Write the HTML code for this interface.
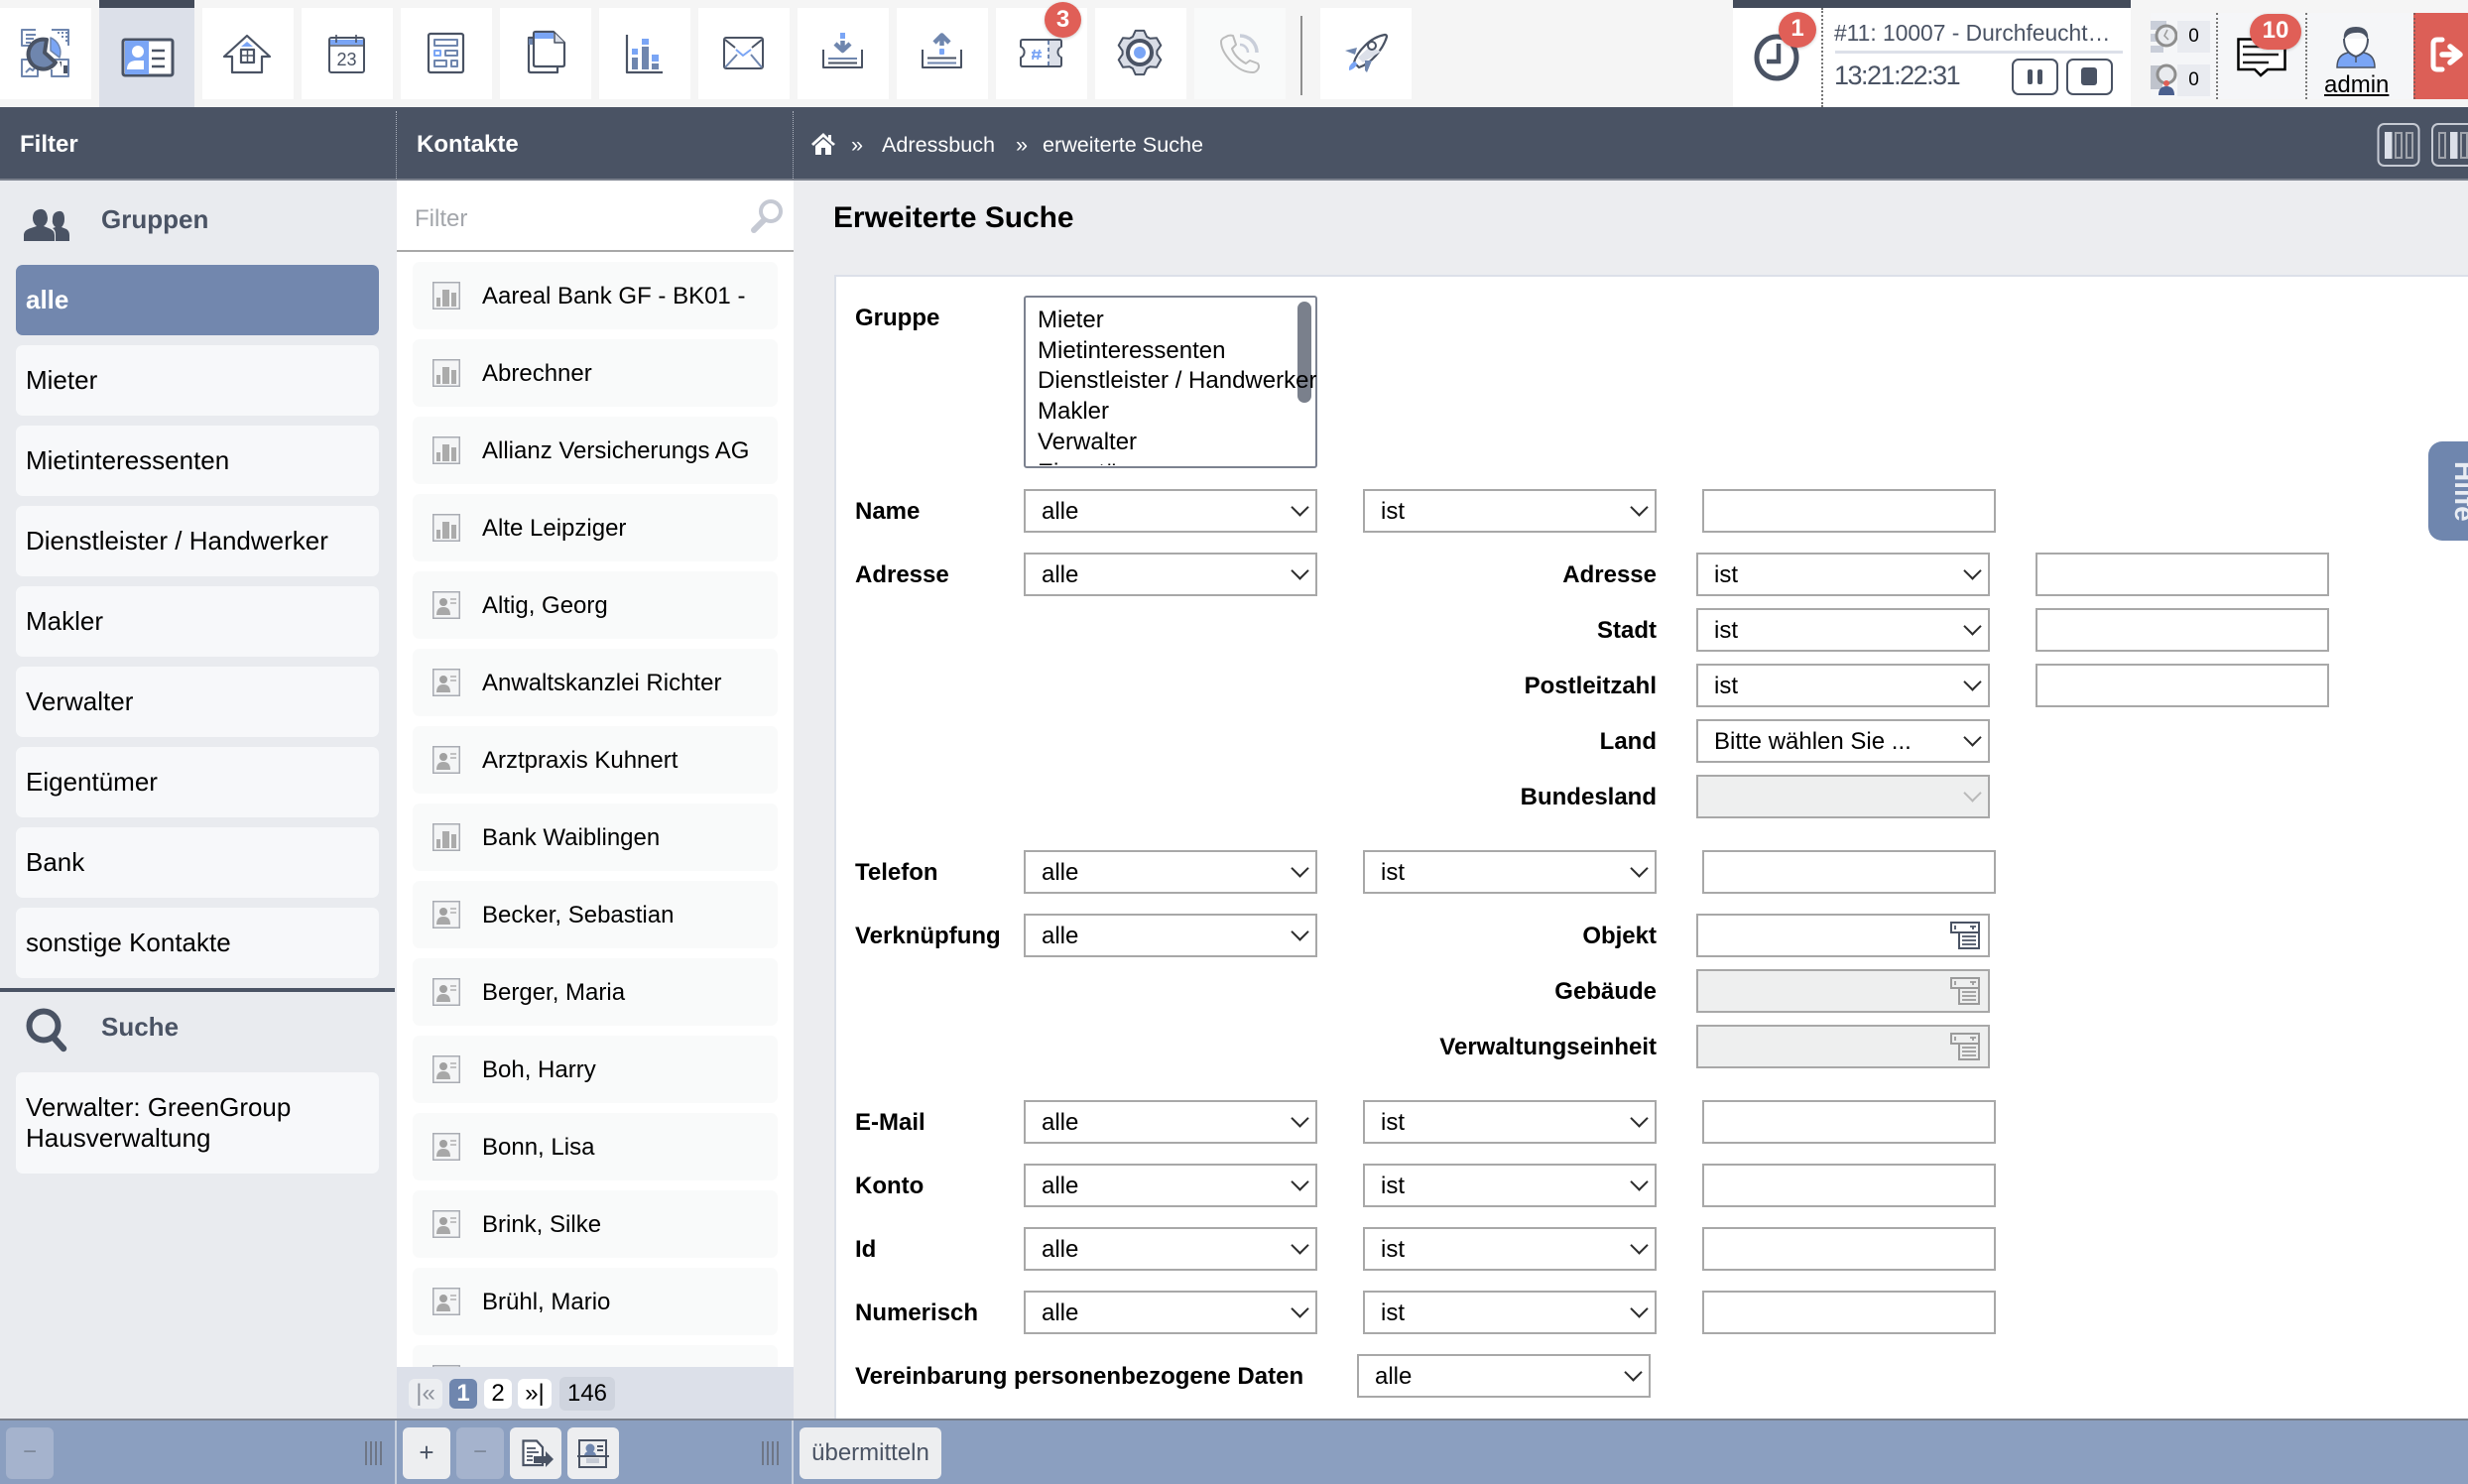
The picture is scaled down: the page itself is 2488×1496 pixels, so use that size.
<!DOCTYPE html>
<html lang="de"><head><meta charset="utf-8"><title>Erweiterte Suche</title>
<style>
*{box-sizing:border-box}
html,body{margin:0;padding:0;width:2488px;height:1496px;overflow:hidden;background:#ecedf0;font-family:"Liberation Sans",sans-serif;font-size:24px;color:#000}
div,span,a{position:absolute;white-space:nowrap}
svg{position:absolute;overflow:visible}
.t{background:#fff;top:8px;width:92px;height:92px}
.h{top:108px;height:72px;line-height:76px;color:#fff}
.g{left:16px;width:366px;height:71px;background:#f7f8fa;border-radius:7px;line-height:71px;padding-left:10px;font-size:26px}
.c{left:416px;width:368px;height:68px;background:#f9fafa;border-radius:7px;line-height:69px;padding-left:70px}
.c svg{left:20px;top:20px}
.l{font-weight:bold;height:44px;line-height:46px}
.r{font-weight:bold;height:44px;line-height:46px;right:818px}
.s,.i{height:44px;width:296px;background:#fff;border:2px solid #a8a8a8;line-height:42px;padding-left:16px}
.s:after{content:"";position:absolute;right:9px;top:10px;width:11px;height:11px;border-right:2px solid #2c2c2c;border-bottom:2px solid #2c2c2c;transform:rotate(45deg)}
.d{background:#eeefef}
.d:after{border-color:#b9b9b9}
.p{top:1439px;height:52px;border-radius:6px;background:#edeef0;text-align:center;line-height:50px;color:#4a5364}
.pd{background:#a5b3cd;color:#7d8899}
.pg{top:1390px;height:30px;line-height:30px;border-radius:6px;background:#fff;text-align:center}
.b{background:#e05f57;color:#fff;font-weight:bold;border-radius:50%;text-align:center;box-shadow:0 1px 3px rgba(0,0,0,.2)}
.o{left:1047px;line-height:30px;height:30px}
</style></head><body>

<!-- top bar -->
<div style="left:0;top:0;width:2488px;height:108px;background:#f5f5f5"></div>
<div class="t" style="left:0"></div>
<div style="left:100px;top:0;width:96px;height:108px;background:#dce0e9"></div>
<div style="left:100px;top:0;width:96px;height:8px;background:#434b5a"></div>
<div class="t" style="left:204px"></div><div class="t" style="left:304px"></div><div class="t" style="left:404px"></div><div class="t" style="left:504px"></div><div class="t" style="left:604px"></div><div class="t" style="left:704px"></div><div class="t" style="left:804px"></div><div class="t" style="left:904px"></div><div class="t" style="left:1004px"></div><div class="t" style="left:1104px"></div>
<div class="t" style="left:1204px;background:#f9fafa"></div>
<div style="left:1311px;top:16px;width:2px;height:80px;background:#8f8f8f"></div>
<div class="t" style="left:1331px"></div>

<svg style="left:0;top:0" width="1440" height="108" viewBox="0 0 1440 108" fill="none" stroke-linejoin="round">
<!-- dashboard -->
<g stroke="#6f86ae" stroke-width="2">
<path d="M36 30H22V46H30M52 30H69V46M30 60H22V77H38V70M55 60H69V77H52V70"/>
<path d="M26 35H36M26 39H34M26 43H31M58 33h2M62 33h2M66 33h2M62 37h2M66 37h2M66 41h2M26 73l4-4 3 2 4-5"/>
</g>
<path d="M60 62h2V68M64 74V66h4v8z" fill="#4a5364"/>
<path d="M47 40A15 15 0 1 0 56 63L45 53Z" fill="#6f86ae" stroke="#4a5364" stroke-width="4"/>
<path d="M51 38A16 16 0 0 1 60 58L51 51Z" fill="#7aa5f5" stroke="#6f86ae" stroke-width="1.5"/>
<!-- contacts -->
<rect x="124" y="40" width="50" height="36" rx="2" fill="#fff" stroke="#4a5364" stroke-width="3"/>
<rect x="126" y="41" width="24" height="34" fill="#7aa5f5"/>
<circle cx="139" cy="52" r="6" fill="#fff"/>
<path d="M128 70q0-9 10-9h7v9z" fill="#fff"/>
<path d="M153 51H166M153 59H166M153 67H166" stroke="#4a5364" stroke-width="2.5"/>
<!-- house -->
<path d="M234 73V57H226L249 36L272 57H264V73Z" stroke="#4a5364" stroke-width="2.2" fill="#fff"/>
<path d="M249 42L243 47H255Z" fill="#7aa5f5"/>
<rect x="243" y="50" width="13" height="13" stroke="#4a5364" stroke-width="2.2"/>
<path d="M249.500 50V63M243 56H256" stroke="#4a5364" stroke-width="1.5"/>
<!-- calendar -->
<rect x="332" y="38" width="35" height="35" rx="2" stroke="#4a5364" stroke-width="2"/>
<rect x="333" y="40" width="33" height="5" fill="#7aa5f5"/>
<path d="M339 35V43M359 35V43" stroke="#4a5364" stroke-width="1.600"/>
<path d="M333 46H366" stroke="#4a5364" stroke-width="1.500"/>
<text x="349.500" y="66" text-anchor="middle" font-family="Liberation Sans" font-size="18" fill="#4a5364" stroke="none">23</text>
<!-- form -->
<rect x="432" y="34" width="35" height="39" rx="2" stroke="#4a5364" stroke-width="2.200"/>
<g stroke="#6f86ae" stroke-width="2"><rect x="438" y="40" width="23" height="6"/><rect x="449" y="51" width="12" height="5"/><rect x="438" y="61" width="12" height="6"/><rect x="455" y="61" width="6" height="6"/></g>
<rect x="438" y="51" width="6" height="5" stroke="#7aa5f5" stroke-width="2"/>
<!-- docs -->
<path d="M538 38H533V71q0 2 2 2H562V67" stroke="#4a5364" stroke-width="2.200"/>
<rect x="533" y="39" width="5" height="6" fill="#6f86ae"/>
<path d="M540 32H558L569 43V65q0 2-2 2H540q-2 0-2-2V34q0-2 2-2Z" stroke="#4a5364" stroke-width="2.200" fill="#fff"/>
<rect x="539" y="33" width="19" height="6" fill="#7aa5f5"/>
<path d="M559 33V43H569" stroke="#4a5364" stroke-width="1.500" fill="#dce0e9"/>
<!-- stats -->
<path d="M632 35V73H668" stroke="#4a5364" stroke-width="2.200"/>
<rect x="637" y="49" width="6" height="6" fill="#7aa5f5"/><rect x="637" y="58" width="6" height="12" fill="#6f86ae"/>
<rect x="647" y="39" width="7" height="6" fill="#7aa5f5"/><rect x="647" y="47" width="7" height="23" fill="#6f86ae"/>
<rect x="657" y="55" width="7" height="7" fill="#7aa5f5"/><rect x="657" y="64" width="7" height="6" fill="#6f86ae"/>
<!-- mail -->
<rect x="730" y="38" width="39" height="31" rx="2" stroke="#4a5364" stroke-width="2"/>
<path d="M731 40L741 48M768 40L758 48" stroke="#4a5364" stroke-width="2"/>
<path d="M742 50L749 56L757 50" stroke="#7aa5f5" stroke-width="2"/>
<path d="M731 68L743 55M768 68L757 55" stroke="#6f86ae" stroke-width="2"/>
<!-- import -->
<path d="M830 50V68H869V50" stroke="#4a5364" stroke-width="2"/>
<rect x="847" y="33" width="5" height="6" fill="#7aa5f5"/>
<path d="M849.500 41V52M842 44L849.500 51L857 44" stroke="#6f86ae" stroke-width="4.500"/>
<path d="M835 59H864" stroke="#6f86ae" stroke-width="2"/><path d="M835 63.500H864" stroke="#4a5364" stroke-width="2"/>
<!-- export -->
<path d="M930 50V68H969V50" stroke="#4a5364" stroke-width="2"/>
<path d="M949.500 46V38M942 43L949.500 35.500L957 43" stroke="#6f86ae" stroke-width="4.500"/>
<rect x="947" y="49" width="5" height="6" rx="1" fill="#7aa5f5"/>
<path d="M935 58.500H964" stroke="#4a5364" stroke-width="2"/><path d="M935 63.500H964" stroke="#6f86ae" stroke-width="2"/>
<!-- ticket -->
<path d="M1031 40H1068q2 0 2 2V47a6 6 0 0 0 0 11V65q0 2-2 2H1031q-2 0-2-2V58a6 6 0 0 0 0-11V42q0-2 2-2Z" stroke="#4a5364" stroke-width="2"/>
<path d="M1057 41H1068q1 0 1 1V47a6 6 0 0 0 0 11V65q0 1-1 1H1057Z" fill="#dce0e9"/>
<path d="M1057 41V66" stroke="#6f86ae" stroke-width="2" stroke-dasharray="4 3"/>
<path d="M1043 50L1041 60M1048 50L1046 60M1040 53H1050M1040 57H1050" stroke="#7aa5f5" stroke-width="1.800"/>
<!-- gear -->
<polygon transform="translate(1149 53)" points="-7.100,-16 -4.300,-22.100 4.300,-22.100 7.100,-16 10.300,-14.200 17,-14.800 21.300,-7.300 17.400,-1.800 17.400,1.800 21.300,7.300 17,14.800 10.300,14.200 7.100,16 4.300,22.100 -4.300,22.100 -7.100,16 -10.300,14.200 -17,14.800 -21.300,7.300 -17.400,1.800 -17.400,-1.800 -21.300,-7.300 -17,-14.800 -10.300,-14.200" fill="#d9dde6" stroke="#4a5364" stroke-width="2"/>
<circle cx="1149" cy="53" r="12" fill="#fff" stroke="#4a5364" stroke-width="4"/>
<circle cx="1149" cy="53" r="6" fill="#7aa5f5"/>
<!-- phone -->
<path d="M1236 37q3-2 7-1l3 9-4 4q3 9 14 15l4-3 8 3q2 3 0 6t-5 3q-12 0-22-11t-10-20q0-3 5-5Z" stroke="#bcbcbc" stroke-width="2"/>
<path d="M1250 36A17 17 0 0 1 1267 53" stroke="#c9ced9" stroke-width="3.500"/>
<path d="M1250 45A8 8 0 0 1 1258 53" stroke="#c9ced9" stroke-width="2.500"/>
<!-- rocket -->
<path d="M1396 34q-11 2-20 11t-11 17l5 5q9-3 17-12t11-19q0-2-2-2Z" transform="translate(0 1)" fill="#fff" stroke="#4a5364" stroke-width="2.200"/>
<path d="M1392 52L1374 63L1369 58L1381 47Z" fill="#dce0e9"/>
<circle cx="1383" cy="46" r="4" fill="#fff" stroke="#4a5364" stroke-width="2"/>
<path d="M1368 48L1356 51L1366 55Z M1376 71L1376 61H1383L1378 73Z" fill="#6f86ae"/>
<path d="M1365 62q3 1 3 3q-3 5-8 6q-1-5 5-9Z" fill="#7aa5f5"/>
</svg>
<div class="b" style="left:1053px;top:2px;width:37px;height:36px;font-size:24px;line-height:35px">3</div>

<!-- timer block -->
<div style="left:1747px;top:0;width:401px;height:108px;background:#fff"></div>
<div style="left:1747px;top:0;width:401px;height:8px;background:#434b5a"></div>
<div style="left:1836px;top:8px;height:100px;border-left:2px dotted #777"></div>
<svg style="left:1747px;top:8px" width="90" height="100" fill="none"><ellipse cx="44" cy="50" rx="20" ry="21" stroke="#4a5364" stroke-width="5"/><path d="M46 36V54H34" stroke="#4a5364" stroke-width="4.500"/></svg>
<div class="b" style="left:1793px;top:12px;width:38px;height:36px;font-size:24px;line-height:34px">1</div>
<div style="left:1849px;top:18px;width:285px;height:30px;line-height:30px;font-size:22.800px;color:#4a5364">#11: 10007 - Durchfeucht…</div>
<div style="left:1850px;top:51px;width:290px;height:2.500px;background:#dce0e9"></div>
<div style="left:1849px;top:58px;height:36px;line-height:36px;font-size:27px;letter-spacing:-1.500px;color:#4a5364">13:21:22:31</div>
<div style="left:2028px;top:59px;width:47px;height:37px;border:2px solid #4a5364;border-radius:7px"></div>
<div style="left:2044px;top:70px;width:5px;height:15px;background:#4a5364;border-radius:2px"></div>
<div style="left:2054px;top:70px;width:5px;height:15px;background:#4a5364;border-radius:2px"></div>
<div style="left:2083px;top:59px;width:47px;height:37px;border:2px solid #4a5364;border-radius:7px"></div>
<div style="left:2098px;top:68px;width:16px;height:18px;background:#4a5364;border-radius:3px"></div>

<!-- right tools -->
<div style="left:2168px;top:13px;width:266px;height:87px;background:#f5f6f8"></div>
<svg style="left:2168px;top:20px" width="30" height="80" fill="none">
<path d="M0 1H16V10H0ZM0 14H16V22H0ZM0 26H13V33H0Z" fill="#c9ced9"/>
<circle cx="16" cy="16" r="10" fill="#e9ebef" stroke="#8e8e8e" stroke-width="3"/><path d="M17 10L14 16L18 20" stroke="#9a9a9a" stroke-width="1.500"/>
<path d="M0 46H12V70H0Z" fill="#bfc3cc"/>
<circle cx="16" cy="55" r="9" fill="#e9ebef" stroke="#8e8e8e" stroke-width="3"/>
<path d="M8 76q0-9 8-9t8 9Z" fill="#4a5f8e"/><circle cx="16" cy="64" r="3" fill="#e05f57"/>
</svg>
<div style="left:2195px;top:21px;width:33px;height:32px;background:#e9ebf0;text-align:center;line-height:32px;font-size:19px">0</div>
<div style="left:2195px;top:65px;width:33px;height:32px;background:#e9ebf0;text-align:center;line-height:32px;font-size:19px">0</div>
<div style="left:2234px;top:13px;height:87px;border-left:2px dotted #777"></div>
<svg style="left:2255px;top:38px" width="52" height="42" fill="none">
<path d="M1.500 1.500H48.500V32H31L24 38L18 32H1.500Z" fill="#fff" stroke="#000" stroke-width="2.500"/>
<path d="M6 9H38M6 17H42M6 25H32" stroke="#222" stroke-width="2.500"/></svg>
<div class="b" style="left:2268px;top:14px;width:52px;height:36px;font-size:24px;line-height:34px;border-radius:18px">10</div>
<div style="left:2324px;top:13px;height:87px;border-left:2px dotted #777"></div>
<svg style="left:2354px;top:26px" width="42" height="44" fill="none">
<path d="M2 42q0-11 8-14l6-2h10l6 2q8 3 8 14Z" fill="#7aa5f5" stroke="#4a5364" stroke-width="1.500"/>
<path d="M9 13q0 14 12 18 12-4 12-18" fill="#fff" stroke="#4a5364" stroke-width="2"/>
<path d="M9 15q-2-14 12-14t12 14q-3-9-12-8-9 0-12 8Z" fill="#4a5364"/>
<path d="M21 31V37" stroke="#4a5364" stroke-width="1.500"/></svg>
<a style="left:2343px;top:71px;height:30px;line-height:30px;color:#000;text-decoration:underline;font-size:24px">admin</a>
<div style="left:2433px;top:13px;width:55px;height:87px;background:#dc5f57;border-left:2px dotted #8a5a58"></div>
<svg style="left:2450px;top:38px" width="38" height="38" fill="none">
<path d="M12 2H7q-4 0-4 4V28q0 4 4 4H12" stroke="#fff" stroke-width="5" stroke-linecap="round"/>
<path d="M12 17H26M20 9L30 17L20 25" stroke="#fff" stroke-width="5.500" stroke-linecap="round" stroke-linejoin="round"/></svg>

<!-- header -->
<div style="left:0;top:108px;width:2488px;height:72px;background:#4a5364"></div>
<div style="left:0;top:180px;width:2488px;height:2px;background:#7a808c"></div>
<div style="left:399px;top:112px;height:68px;border-left:1px dotted #aab0bc"></div>
<div style="left:799px;top:112px;height:68px;border-left:1px dotted #aab0bc"></div>
<div class="h" style="left:20px;font-weight:bold">Filter</div>
<div class="h" style="left:420px;font-weight:bold">Kontakte</div>
<svg style="left:818px;top:133px" width="26" height="24"><path d="M0 12L12 1L17 6V3H20V9L24 12L22 14L12 5L2 14ZM4 14L12 7L20 14V23H14V16H10V23H4Z" fill="#fff"/></svg>
<div class="h" style="left:858px;font-size:21.600px">»</div>
<div class="h" style="left:889px;font-size:21.600px">Adressbuch</div>
<div class="h" style="left:1024px;font-size:21.600px">»</div>
<div class="h" style="left:1051px;font-size:21.600px">erweiterte Suche</div>
<svg style="left:2396px;top:123px" width="92" height="46" fill="none">
<rect x="1.500" y="2" width="41" height="42" rx="6" stroke="#c6cad3" stroke-width="2"/>
<rect x="8" y="10" width="7.500" height="27" fill="#dce0e9"/><rect x="19" y="11" width="6" height="25" stroke="#a0a4ac" stroke-width="2"/><rect x="30" y="11" width="6" height="25" stroke="#a0a4ac" stroke-width="2"/>
<rect x="56" y="2" width="44" height="42" rx="6" stroke="#c6cad3" stroke-width="2"/>
<rect x="63" y="11" width="6" height="25" stroke="#a0a4ac" stroke-width="2"/><rect x="74" y="10" width="7.500" height="27" fill="#dce0e9"/><rect x="85" y="11" width="6" height="25" stroke="#a0a4ac" stroke-width="2"/></svg>

<!-- filter col -->
<div style="left:0;top:182px;width:400px;height:1248px;background:#e9ebef"></div>
<svg style="left:24px;top:211px" width="46" height="33"><path d="M0 32V26q0-5 7-7l6-2q-4-3-4-8 0-8 7-9t8 9q0 5-4 8l5 2q6 2 6 7v6Z" fill="#4a5364"/><path d="M32 32v-7q0-4-3-6l3-1q-4-3-3-8 0-7 6-8t6 8q0 5-3 8l5 2q3 2 3 6v6Z" fill="#4a5364"/></svg>
<div style="left:102px;top:200px;height:42px;line-height:42px;font-size:26px;font-weight:bold;color:#4a5364">Gruppen</div>
<div class="g" style="top:267px;background:#7287ae;color:#fff;font-weight:bold">alle</div>
<div class="g" style="top:348px">Mieter</div>
<div class="g" style="top:429px">Mietinteressenten</div>
<div class="g" style="top:510px">Dienstleister / Handwerker</div>
<div class="g" style="top:591px">Makler</div>
<div class="g" style="top:672px">Verwalter</div>
<div class="g" style="top:753px">Eigentümer</div>
<div class="g" style="top:834px">Bank</div>
<div class="g" style="top:915px">sonstige Kontakte</div>
<div style="left:0;top:996px;width:398px;height:4px;background:#4a5364"></div>
<svg style="left:25px;top:1016px" width="44" height="44" fill="none"><circle cx="19" cy="18" r="14.500" stroke="#4a5364" stroke-width="6"/><path d="M29 30L39 41" stroke="#4a5364" stroke-width="6.500" stroke-linecap="round"/></svg>
<div style="left:102px;top:1014px;height:42px;line-height:42px;font-size:26px;font-weight:bold;color:#4a5364">Suche</div>
<div class="g" style="top:1081px;height:102px;line-height:31px;padding-top:20px">Verwalter: GreenGroup<br>Hausverwaltung</div>

<svg width="0" height="0" style="left:0;top:0">
<symbol id="ch" viewBox="0 0 28 28"><rect x=".75" y=".75" width="26.500" height="26.500" fill="#f4f5f6" stroke="#a9acb3" stroke-width="1.500"/><path d="M4 16h4v9H4zM10 8h7v17h-7zM19 11h5v14h-5z" fill="#ababab"/></symbol>
<symbol id="pe" viewBox="0 0 28 28"><rect x=".75" y=".75" width="26.500" height="26.500" fill="#f4f5f6" stroke="#a9acb3" stroke-width="1.500"/><circle cx="11" cy="11" r="4" fill="#a0a0a0"/><path d="M4 24q0-8 7-8t7 8Z" fill="#a8a8a8"/><path d="M18 8h6M18 12h6" stroke="#b0b0b0" stroke-width="1.500"/></symbol>
</svg>

<!-- contacts col -->
<div style="left:400px;top:182px;width:400px;height:1196px;background:#fff;overflow:hidden">
<div style="left:18px;top:21px;height:36px;line-height:36px;color:#a3a6ab">Filter</div>
<svg style="left:356px;top:18px" width="34" height="36" fill="none"><circle cx="21" cy="13" r="10" stroke="#c5c9d3" stroke-width="4"/><path d="M14 22L4 32" stroke="#c5c9d3" stroke-width="6" stroke-linecap="round"/></svg>
<div style="left:0;top:70px;width:400px;height:2px;background:#a8a8a8"></div>
<div class="c" style="left:16px;top:82px"><svg width="28" height="28"><use href="#ch"/></svg>Aareal Bank GF - BK01 -</div>
<div class="c" style="left:16px;top:160px"><svg width="28" height="28"><use href="#ch"/></svg>Abrechner</div>
<div class="c" style="left:16px;top:238px"><svg width="28" height="28"><use href="#ch"/></svg>Allianz Versicherungs AG</div>
<div class="c" style="left:16px;top:316px"><svg width="28" height="28"><use href="#ch"/></svg>Alte Leipziger</div>
<div class="c" style="left:16px;top:394px"><svg width="28" height="28"><use href="#pe"/></svg>Altig, Georg</div>
<div class="c" style="left:16px;top:472px"><svg width="28" height="28"><use href="#pe"/></svg>Anwaltskanzlei Richter</div>
<div class="c" style="left:16px;top:550px"><svg width="28" height="28"><use href="#pe"/></svg>Arztpraxis Kuhnert</div>
<div class="c" style="left:16px;top:628px"><svg width="28" height="28"><use href="#ch"/></svg>Bank Waiblingen</div>
<div class="c" style="left:16px;top:706px"><svg width="28" height="28"><use href="#pe"/></svg>Becker, Sebastian</div>
<div class="c" style="left:16px;top:784px"><svg width="28" height="28"><use href="#pe"/></svg>Berger, Maria</div>
<div class="c" style="left:16px;top:862px"><svg width="28" height="28"><use href="#pe"/></svg>Boh, Harry</div>
<div class="c" style="left:16px;top:940px"><svg width="28" height="28"><use href="#pe"/></svg>Bonn, Lisa</div>
<div class="c" style="left:16px;top:1018px"><svg width="28" height="28"><use href="#pe"/></svg>Brink, Silke</div>
<div class="c" style="left:16px;top:1096px"><svg width="28" height="28"><use href="#pe"/></svg>Brühl, Mario</div>
<div class="c" style="left:16px;top:1174px"><svg width="28" height="28"><use href="#pe"/></svg></div>
</div>

<!-- pagination -->
<div style="left:400px;top:1378px;width:400px;height:52px;background:#dce0e9"></div>
<div class="pg" style="left:412px;width:34px;background:#eceef1;color:#8d929c">|«</div>
<div class="pg" style="left:453px;width:28px;background:#6f86ae;color:#fff;font-weight:bold">1</div>
<div class="pg" style="left:488px;width:28px">2</div>
<div class="pg" style="left:522px;width:34px">»|</div>
<div class="pg" style="left:564px;top:1388px;width:56px;height:34px;line-height:34px;background:#cfd4de">146</div>

<!-- main -->
<div style="left:800px;top:182px;width:1688px;height:1248px;background:#ecedf0"></div>
<div style="left:840px;top:220px;height:0"><span style="left:0;top:-20px;height:40px;line-height:40px;font-size:29.900px;font-weight:bold">Erweiterte Suche</span></div>
<div style="left:841px;top:277px;width:1647px;height:1153px;background:#fff;border-left:2px solid #dce0e9;border-top:2px solid #dce0e9"></div>

<!-- Hilfe -->
<div style="left:2448px;top:445px;width:40px;height:100px;background:#6f86ae;border-radius:14px 0 0 14px;overflow:hidden"><span style="left:16px;top:20px;writing-mode:vertical-rl;color:#e8ecf3;font-size:28px;font-weight:bold;line-height:40px">Hilfe</span></div>

<!-- form -->
<div class="l" style="left:862px;top:298px">Gruppe</div>
<div style="left:1032px;top:298px;width:296px;height:174px;background:#fff;border:2px solid #7c8290;border-radius:3px"></div>
<div style="left:1034px;top:300px;width:293px;height:169px;overflow:hidden">
<div style="left:274px;top:4px;width:14px;height:102px;background:#7a808c;border-radius:7px"></div>
<div class="o" style="left:12px;top:8px">Mieter</div>
<div class="o" style="left:12px;top:39px">Mietinteressenten</div>
<div class="o" style="left:12px;top:69px">Dienstleister / Handwerker</div>
<div class="o" style="left:12px;top:100px">Makler</div>
<div class="o" style="left:12px;top:131px">Verwalter</div>
<div class="o" style="left:12px;top:162px">Eigentümer</div>
</div>

<div class="l" style="left:862px;top:493px">Name</div>
<div class="s" style="left:1032px;top:493px">alle</div><div class="s" style="left:1374px;top:493px">ist</div><div class="i" style="left:1716px;top:493px"></div>

<div class="l" style="left:862px;top:557px">Adresse</div>
<div class="s" style="left:1032px;top:557px">alle</div>
<div class="r" style="top:557px">Adresse</div><div class="s" style="left:1710px;top:557px">ist</div><div class="i" style="left:2052px;top:557px"></div>
<div class="r" style="top:613px">Stadt</div><div class="s" style="left:1710px;top:613px">ist</div><div class="i" style="left:2052px;top:613px"></div>
<div class="r" style="top:669px">Postleitzahl</div><div class="s" style="left:1710px;top:669px">ist</div><div class="i" style="left:2052px;top:669px"></div>
<div class="r" style="top:725px">Land</div><div class="s" style="left:1710px;top:725px">Bitte wählen Sie ...</div>
<div class="r" style="top:781px">Bundesland</div><div class="s d" style="left:1710px;top:781px"></div>

<div class="l" style="left:862px;top:857px">Telefon</div>
<div class="s" style="left:1032px;top:857px">alle</div><div class="s" style="left:1374px;top:857px">ist</div><div class="i" style="left:1716px;top:857px"></div>

<div class="l" style="left:862px;top:921px">Verknüpfung</div>
<div class="s" style="left:1032px;top:921px">alle</div>
<div class="r" style="top:921px">Objekt</div><div class="i" style="left:1710px;top:921px"></div>
<div class="r" style="top:977px">Gebäude</div><div class="i d" style="left:1710px;top:977px"></div>
<div class="r" style="top:1033px">Verwaltungseinheit</div><div class="i d" style="left:1710px;top:1033px"></div>
<svg width="0" height="0" style="left:0;top:0"><symbol id="pk" viewBox="0 0 30 28"><path d="M1 1H29V11H1ZM9 11V27H29V11" fill="none" stroke="currentColor" stroke-width="2"/><path d="M5 4V8M20 5H26M23 5V8M12 15H26M12 19H26M12 23H26" fill="none" stroke="currentColor" stroke-width="1.800"/></symbol></svg>
<svg style="left:1966px;top:929px;color:#4a5364" width="30" height="28"><use href="#pk"/></svg>
<svg style="left:1966px;top:985px;color:#9a9a9a" width="30" height="28"><use href="#pk"/></svg>
<svg style="left:1966px;top:1041px;color:#9a9a9a" width="30" height="28"><use href="#pk"/></svg>

<div class="l" style="left:862px;top:1109px">E-Mail</div>
<div class="s" style="left:1032px;top:1109px">alle</div><div class="s" style="left:1374px;top:1109px">ist</div><div class="i" style="left:1716px;top:1109px"></div>
<div class="l" style="left:862px;top:1173px">Konto</div>
<div class="s" style="left:1032px;top:1173px">alle</div><div class="s" style="left:1374px;top:1173px">ist</div><div class="i" style="left:1716px;top:1173px"></div>
<div class="l" style="left:862px;top:1237px">Id</div>
<div class="s" style="left:1032px;top:1237px">alle</div><div class="s" style="left:1374px;top:1237px">ist</div><div class="i" style="left:1716px;top:1237px"></div>
<div class="l" style="left:862px;top:1301px">Numerisch</div>
<div class="s" style="left:1032px;top:1301px">alle</div><div class="s" style="left:1374px;top:1301px">ist</div><div class="i" style="left:1716px;top:1301px"></div>
<div class="l" style="left:862px;top:1365px">Vereinbarung personenbezogene Daten</div>
<div class="s" style="left:1368px;top:1365px">alle</div>

<!-- bottom bar -->
<div style="left:0;top:1430px;width:2488px;height:66px;background:#8b9fc0"></div>
<div style="left:0;top:1430px;width:2488px;height:2px;background:#7a808c"></div>
<div style="left:398px;top:1432px;width:2px;height:64px;background:#c6cfdd"></div>
<div style="left:798px;top:1432px;width:2px;height:64px;background:#c6cfdd"></div>
<div class="p pd" style="left:6px;width:48px">−</div>
<div class="p" style="left:406px;width:48px;font-size:26px">+</div>
<div class="p pd" style="left:460px;width:48px">−</div>
<div class="p" style="left:514px;width:52px"></div>
<div class="p" style="left:572px;width:52px"></div>
<div class="p" style="left:806px;width:143px;line-height:52px">übermitteln</div>
<svg style="left:526px;top:1451px" width="34" height="30" fill="none"><path d="M1.500 1.500H15L21 8V26H1.500Z" fill="#fff" stroke="#4a5364" stroke-width="2.200"/><path d="M5 9H14M5 13H17M5 17H11M5 21H11" stroke="#4a5364" stroke-width="1.800"/><path d="M12 17H24V12L32 20L24 28V24H12Z" fill="#4a5364"/></svg>
<svg style="left:582px;top:1451px" width="32" height="30" fill="none"><rect x="2" y="1" width="27" height="27" fill="#edeef0" stroke="#4a5364" stroke-width="2"/><circle cx="13" cy="9" r="4.500" fill="#6f86ae"/><path d="M7 17q0-5 6-5t6 5Z" fill="#6f86ae"/><path d="M20 7H26M20 11H26" stroke="#4a5364" stroke-width="2"/><path d="M0 17H32" stroke="#4a5364" stroke-width="2"/><rect x="9" y="19" width="13" height="5" fill="#c5cad4"/></svg>
<svg style="left:367px;top:1453px" width="19" height="24" fill="none" stroke="#6e7686" stroke-width="2"><path d="M2 0V24M7 0V24M12 0V24M17 0V24"/></svg>
<svg style="left:767px;top:1453px" width="19" height="24" fill="none" stroke="#6e7686" stroke-width="2"><path d="M2 0V24M7 0V24M12 0V24M17 0V24"/></svg>
</body></html>
